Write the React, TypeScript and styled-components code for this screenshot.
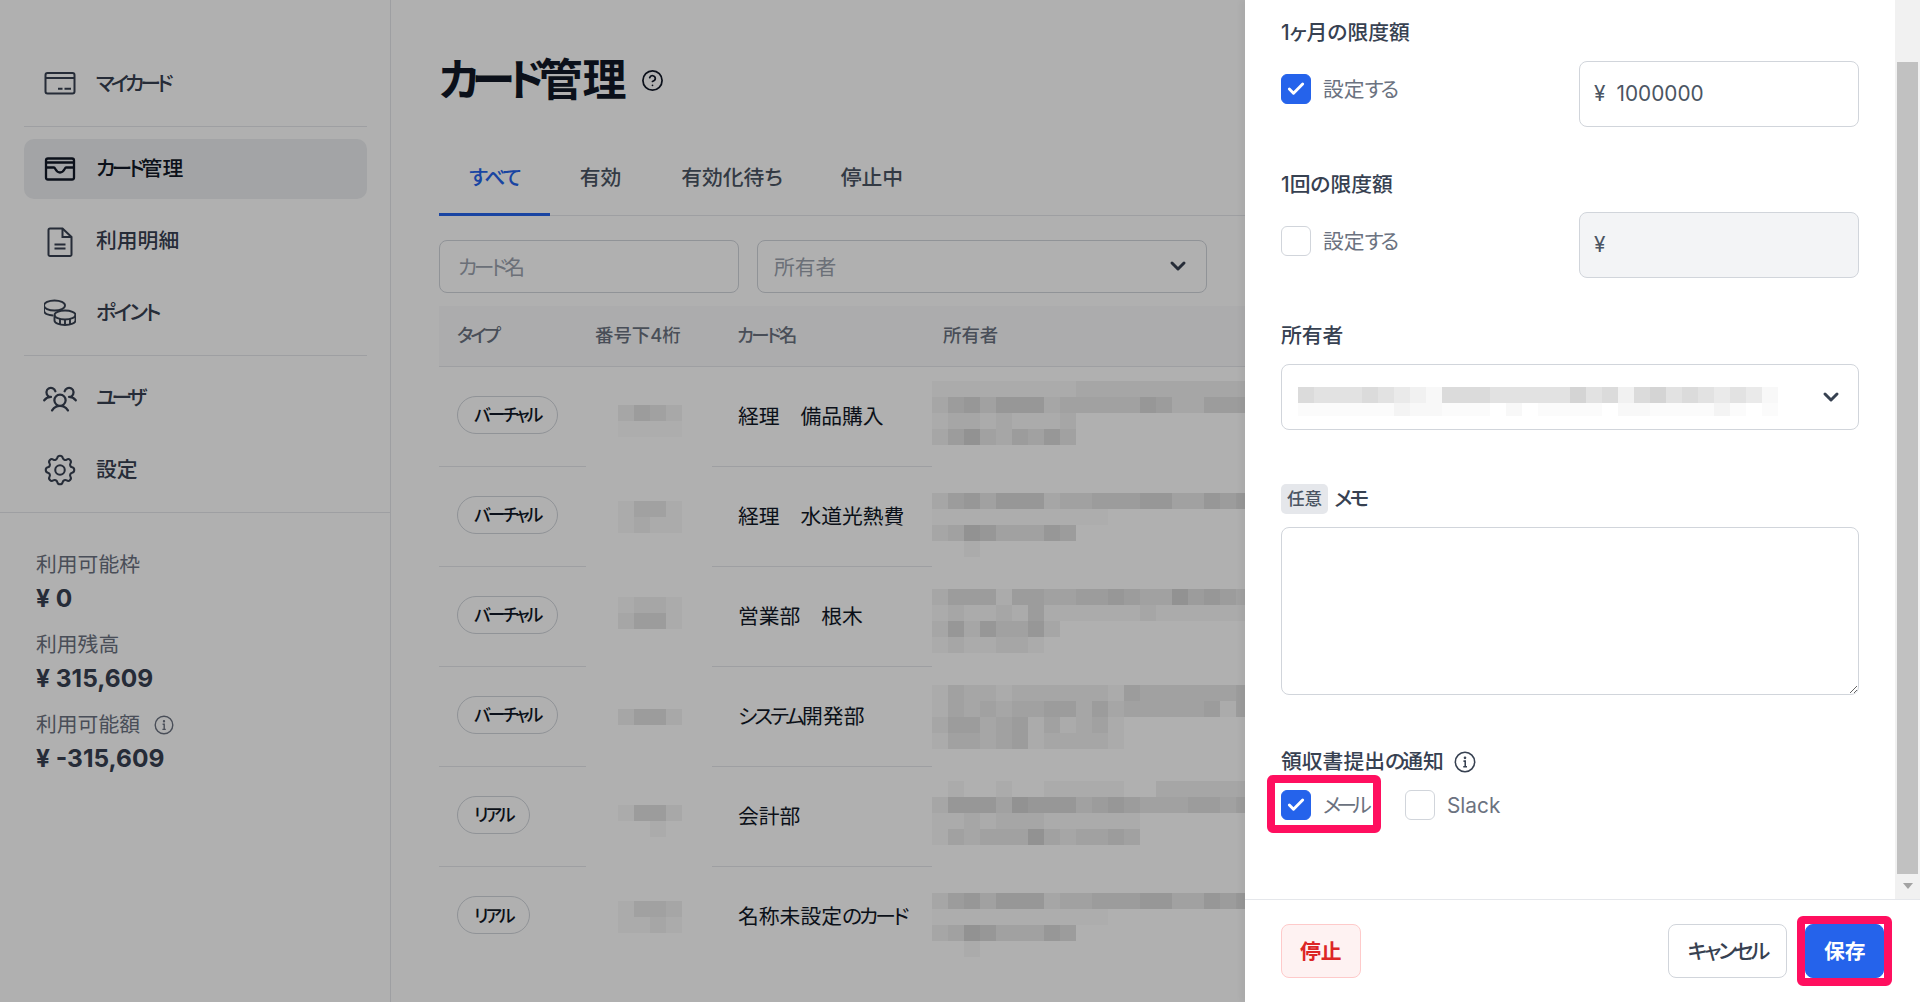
import React from "react";
import styled, { createGlobalStyle } from "styled-components";
import { ChevronDown, Check, CircleHelp } from "lucide-react";
import { TbSettings } from "react-icons/tb";
import { PiUsersThree } from "react-icons/pi";

const GlobalStyle = createGlobalStyle`
  html, body {
    margin: 0;
    padding: 0;
    background: #fff;
  }
  body {
    font-family: Inter, "Noto Sans CJK JP", sans-serif;
    font-feature-settings: "palt";
    color: #374151;
  }
  * {
    box-sizing: border-box;
  }
`;

const Page = styled.div`
  position: relative;
  display: flex;
  width: 1920px;
  height: 1002px;
  overflow: hidden;
  background: #fff;
`;

const Sidebar = styled.aside`
  flex: 0 0 391px;
  border-right: 1px solid #e5e7eb;
`;

const Nav = styled.nav`
  display: flex;
  flex-direction: column;
  gap: 12px;
  padding: 54px 23px 12px 24px;
  border-bottom: 1px solid #e5e7eb;
`;

const NavItem = styled.a<{ $active?: boolean }>`
  display: flex;
  align-items: center;
  gap: 20px;
  height: 60px;
  padding: 0 20px;
  border-radius: 10px;
  font-size: 20.8px;
  font-weight: 500;
  color: ${props => (props.$active ? "#111827" : "#374151")};
  background: ${props => (props.$active ? "#eceef1" : "transparent")};
  svg {
    flex: 0 0 32px;
    width: 32px;
    height: 32px;
  }
`;

const NavLabel = styled.span<{ $kana?: number }>`
  padding-bottom: 4px;
  span {
    letter-spacing: ${props => props.$kana ?? -0.14}em;
  }
`;

const UsersIcon = styled(PiUsersThree)`
  && {
    flex: 0 0 36px;
    width: 36px;
    height: 36px;
    margin: 0 -2px;
  }
`;

const GearIcon = styled(TbSettings)`
  && {
    flex: 0 0 38px;
    width: 38px;
    height: 38px;
    margin: 0 -3px;
    stroke-width: 1.3;
  }
`;

const NavDivider = styled.hr`
  width: 100%;
  height: 1px;
  margin: 0;
  border: 0;
  background: #e5e7eb;
`;

const Stats = styled.div`
  display: flex;
  flex-direction: column;
  gap: 15px;
  padding: 37px 36px 0;
`;

const StatLabel = styled.div`
  display: flex;
  align-items: center;
  gap: 14px;
  font-size: 20.8px;
  line-height: 30px;
  color: #6b7280;
`;

const StatValue = styled.div`
  margin-top: 1px;
  font-size: 24.5px;
  line-height: 34px;
  font-weight: 700;
  color: #374151;
`;

const Main = styled.main`
  flex: 1;
  min-width: 0;
  padding: 52px 0 0 48px;
`;

const TitleRow = styled.div`
  display: flex;
  align-items: center;
  gap: 14px;
  height: 56px;
  margin-bottom: 32px;
  color: #111827;
`;

const Title = styled.h1`
  margin: 0;
  font-size: 44px;
  line-height: 56px;
  font-weight: 600;
  span {
    letter-spacing: -0.17em;
  }
`;

const Tabs = styled.div`
  display: flex;
  height: 76px;
  border-bottom: 1px solid #e5e7eb;
`;

const Tab = styled.div<{ $active?: boolean }>`
  display: flex;
  align-items: center;
  height: 76px;
  padding: 0 30px 2px;
  border-bottom: 3px solid ${props => (props.$active ? "#2563eb" : "transparent")};
  font-size: 20.8px;
  font-weight: 500;
  color: ${props => (props.$active ? "#2563eb" : "#4b5563")};
  span span {
    letter-spacing: -0.1em;
  }
`;

const Filters = styled.div`
  display: flex;
  gap: 18px;
  margin: 24px 0 13px;
`;

const FilterInput = styled.input`
  width: 300px;
  height: 53px;
  padding: 2px 18px 0;
  border: 1px solid #d1d5db;
  border-radius: 8px;
  background: #fff;
  font: inherit;
  font-size: 20.8px;
  font-feature-settings: "palt";
  &::placeholder {
    color: #9ca3af;
    letter-spacing: -0.16em;
  }
`;

const FilterSelect = styled.div`
  display: flex;
  align-items: center;
  justify-content: space-between;
  width: 450px;
  height: 53px;
  padding: 0 16px 2px;
  border: 1px solid #d1d5db;
  border-radius: 8px;
  font-size: 20.8px;
  color: #9ca3af;
  svg {
    color: #374151;
  }
`;

const CardTable = styled.table`
  width: 100%;
  table-layout: fixed;
  border-collapse: separate;
  border-spacing: 0;
`;

const HeadCell = styled.th<{ $width?: number }>`
  width: ${props => (props.$width ? `${props.$width}px` : "auto")};
  height: 61px;
  padding: 0 0 4px 18px;
  border-bottom: 1px solid #e5e7eb;
  background: #f9fafb;
  font-size: 18.4px;
  font-weight: 500;
  text-align: left;
  color: #6b7280;
`;

const BodyRow = styled.tr`
  &:last-child td {
    border-bottom: 0;
  }
`;

const BodyCell = styled.td<{ $pad?: number }>`
  position: relative;
  height: 100px;
  padding: 0 0 4px ${props => props.$pad ?? 18}px;
  border-bottom: 1px solid #e5e7eb;
  font-size: 20.8px;
  color: #111827;
`;

const TypeTag = styled.span`
  display: inline-flex;
  align-items: center;
  height: 38px;
  padding: 0 16px 2px;
  border: 1px solid #d1d5db;
  border-radius: 19px;
  font-size: 17.6px;
  font-weight: 500;
  color: #111827;
  span span {
    letter-spacing: -0.16em;
  }
`;

const MosaicCover = styled.svg<{ $left: number; $width: number }>`
  position: absolute;
  top: 0;
  left: ${props => props.$left}px;
  width: ${props => props.$width}px;
  height: 101px;
  background: #fff;
`;

const Overlay = styled.div`
  position: absolute;
  inset: 0;
  background: rgba(0, 0, 0, 0.31);
`;

const Panel = styled.section`
  position: absolute;
  top: 0;
  right: 0;
  bottom: 0;
  display: flex;
  flex-direction: column;
  width: 675px;
  background: #fff;
  box-shadow: -4px 0 6px rgba(0, 0, 0, 0.04);
`;

const PanelBody = styled.div`
  display: flex;
  height: 899px;
`;

const Form = styled.div`
  flex: 1;
  display: flex;
  flex-direction: column;
  padding: 19px 36px 0;
`;

const Field = styled.div<{ $top?: number }>`
  margin-top: ${props => props.$top ?? 0}px;
`;

const FieldLabel = styled.div<{ $gap?: number; $below?: number }>`
  display: flex;
  align-items: center;
  gap: ${props => props.$gap ?? 6}px;
  margin-bottom: ${props => props.$below ?? 14}px;
  min-height: 28px;
  font-size: 20.8px;
  line-height: 28px;
  font-weight: 500;
  color: #374151;
`;

const OptionalBadge = styled.span`
  display: inline-flex;
  align-items: center;
  height: 30px;
  padding: 0 6px;
  border-radius: 5px;
  background: #e5e7eb;
  font-size: 17.6px;
  font-weight: 500;
  color: #4b5563;
`;

const LimitRow = styled.div`
  display: flex;
  justify-content: space-between;
  align-items: flex-start;
`;

const CheckLabel = styled.label<{ $top?: number }>`
  position: relative;
  display: flex;
  align-items: center;
  gap: 12px;
  height: 30px;
  margin-top: ${props => props.$top ?? 0}px;
  font-size: 20.8px;
  line-height: 30px;
  color: #6b7280;
`;

const CheckText = styled.span<{ $kana?: number }>`
  padding-top: 2px;
  span {
    letter-spacing: ${props => props.$kana ?? -0.14}em;
  }
`;

const CheckBox = styled.span<{ $checked?: boolean }>`
  display: flex;
  align-items: center;
  justify-content: center;
  width: 30px;
  height: 30px;
  border-radius: 6px;
  border: 1px solid ${props => (props.$checked ? "#2563eb" : "#d1d5db")};
  background: ${props => (props.$checked ? "#2563eb" : "#fff")};
  color: #fff;
`;

const AmountBox = styled.div<{ $disabled?: boolean }>`
  display: flex;
  align-items: center;
  gap: 11px;
  width: 280px;
  height: 66px;
  padding: 0 14px 2px;
  border: 1px solid #d1d5db;
  border-radius: 8px;
  background: ${props => (props.$disabled ? "#f3f4f6" : "#fff")};
  font-size: 20.8px;
  color: #4b5563;
`;

const AmountInput = styled.input`
  flex: 1;
  min-width: 0;
  padding: 0;
  border: 0;
  outline: 0;
  background: transparent;
  font: inherit;
  color: #4b5563;
`;

const OwnerSelect = styled.div`
  position: relative;
  display: flex;
  align-items: center;
  justify-content: flex-end;
  height: 66px;
  padding: 0 15px;
  border: 1px solid #d1d5db;
  border-radius: 8px;
  color: #374151;
`;

const OwnerMosaic = styled.svg`
  position: absolute;
  top: 22px;
  left: 16px;
  width: 480px;
  height: 29px;
`;

const MemoArea = styled.textarea`
  display: block;
  width: 100%;
  height: 168px;
  border: 1px solid #d1d5db;
  border-radius: 8px;
  outline: 0;
  background: #fff;
`;

const NotifyRow = styled.div`
  display: flex;
  gap: 38px;
`;

const Marked = styled.div<{ $t: number; $r: number; $b: number; $l: number }>`
  position: relative;
  &::after {
    content: "";
    position: absolute;
    top: ${props => props.$t}px;
    right: ${props => props.$r}px;
    bottom: ${props => props.$b}px;
    left: ${props => props.$l}px;
    border: 8px solid #ff0f5f;
    border-radius: 6px;
    pointer-events: none;
  }
`;

const ScrollTrack = styled.div`
  display: flex;
  flex-direction: column;
  align-items: center;
  flex: 0 0 25px;
  padding-top: 62px;
  background: #f1f1f1;
`;

const ScrollThumb = styled.div`
  width: 21px;
  height: 812px;
  background: #c1c1c1;
`;

const ScrollArrow = styled.div`
  width: 0;
  height: 0;
  margin-top: 9px;
  border-left: 5px solid transparent;
  border-right: 5px solid transparent;
  border-top: 6px solid #a3a3a3;
`;

const Footer = styled.footer`
  display: flex;
  align-items: center;
  justify-content: space-between;
  flex: 1;
  padding: 0 36px;
  border-top: 1px solid #e5e7eb;
`;

const FooterRight = styled.div`
  display: flex;
  gap: 18px;
`;

const Button = styled.button<{ $kind: "danger" | "plain" | "primary" }>`
  height: 54px;
  padding: 0 ${props => (props.$kind === "plain" ? 19 : props.$kind === "primary" ? 17.5 : 18)}px 3px;
  border-radius: 8px;
  border: 1px solid
    ${props =>
      props.$kind === "danger" ? "#fecaca" : props.$kind === "plain" ? "#d1d5db" : "#2563eb"};
  background: ${props =>
    props.$kind === "danger" ? "#fef2f2" : props.$kind === "plain" ? "#fff" : "#2563eb"};
  color: ${props =>
    props.$kind === "danger" ? "#dc2626" : props.$kind === "plain" ? "#374151" : "#fff"};
  font-family: inherit;
  font-feature-settings: "palt";
  font-size: 20.8px;
  font-weight: ${props => (props.$kind === "plain" ? 500 : 600)};
`;

const KanaRun = styled.span`
  letter-spacing: -0.14em;
`;

// the kana in the shot come from a narrower face, so runs of kana get tightened
const Jp = ({ children }: { children: string }) => (
  <>
    {children.split(/([\u3040-\u30ff]+)/).map((part, i) =>
      i % 2 === 1 ? <KanaRun key={i}>{part}</KanaRun> : part
    )}
  </>
);

const Mosaic = ({ rows, top = 0 }: { rows: string[]; top?: number }) => (
  <>
    {rows.map((row, r) =>
      row.split("").map((ch, i) => (
        <rect
          key={`${r}-${i}`}
          x={i * 16}
          y={top + r * 16}
          width={16}
          height={16}
          fill="#000"
          opacity={parseInt(ch, 16) * 0.014}
        />
      ))
    )}
  </>
);

const InfoIcon = ({ size }: { size: number }) => (
  <svg width={size} height={size} viewBox="0 0 20 20" fill="none" stroke="currentColor" strokeWidth="1.4">
    <circle cx="10" cy="10" r="8.8" />
    <path d="M8.6 9.2h1.6v5M8.4 14.4h3.4" />
    <circle cx="10" cy="6.2" r="0.5" fill="currentColor" />
  </svg>
);

const MyCardIcon = () => (
  <svg viewBox="0 0 32 32" fill="none" stroke="currentColor" strokeWidth="2">
    <rect x="1.5" y="5" width="29" height="20.5" rx="2" />
    <path d="M1.5 10h29M14 20.800h4.500M20.500 20.800h6.500" />
  </svg>
);

const WalletIcon = () => (
  <svg viewBox="0 0 32 32" fill="none" stroke="currentColor" strokeWidth="2.3">
    <rect x="2" y="5.500" width="28" height="21" rx="2" />
    <path d="M2 9.500h28M2 14.500h8c1.500 0 1.500 5 6 5s4.500-5 6-5h8" />
  </svg>
);

const DocIcon = () => (
  <svg viewBox="0 0 32 32" fill="none" stroke="currentColor" strokeWidth="2">
    <path d="M6 3.500h12.500l9 8.500v17.500a1.500 1.500 0 0 1-1.500 1.500H6a1.500 1.500 0 0 1-1.500-1.500V5a1.500 1.500 0 0 1 1.500-1.500z" />
    <path d="M18.500 3.500V12h9M10.500 19.500h11M10.500 23.500h11" />
  </svg>
);

const CoinsIcon = () => (
  <svg viewBox="0 0 32 32" fill="none" stroke="currentColor" strokeWidth="1.9">
    <ellipse cx="10.500" cy="8.500" rx="10.500" ry="5" />
    <path d="M0 8.500v5c0 2.500 4 4.500 9 5" />
    <ellipse cx="21" cy="18" rx="10.500" ry="4.500" />
    <path d="M10.500 18v5.500c0 2.500 4.500 4.500 10.500 4.500s10.500-2 10.500-4.500V18M16 22v5.500M21 22.500v5.500M26 22v5.500" />
  </svg>
);

const OWNER_SAME = ["48a6aaa466888aa66a8ae0", "11111111111", "46ca666a8", "0020"];

const cards = [
  {
    type: "バーチャル",
    name: "経理　備品購入",
    digitTop: 38,
    digits: ["00486300", "00111100"],
    ownerTop: 14,
    owner: ["22222222244444444444", "48a6aaa466666a844888a", "244242224", "48c6486a6"],
  },
  {
    type: "バーチャル",
    name: "経理　水道光熱費",
    digitTop: 34,
    digits: ["00266200", "00242200"],
    ownerTop: 26,
    owner: OWNER_SAME,
  },
  {
    type: "バーチャル",
    name: "営業部　根木",
    digitTop: 30,
    digits: ["00244200", "00488200"],
    ownerTop: 22,
    owner: ["48882886688a866c8a86", "24224282222224222222", "4a4a66a4", "2422442"],
  },
  {
    type: "バーチャル",
    name: "システム開発部",
    digitTop: 42,
    digits: ["00488300"],
    ownerTop: 18,
    owner: ["26442444444286666668", "26464668848466666828", "488468262462", "266468244442"],
  },
  {
    type: "リアル",
    name: "会計部",
    digitTop: 38,
    digits: ["00288300", "00002000"],
    ownerTop: 14,
    owner: ["02002002222200444444", "4aaa6caaa68a86668868", "2242444222222", "264666c646686"],
  },
  {
    type: "リアル",
    name: "名称未設定のカード",
    digitTop: 34,
    digits: ["00266400", "00224200"],
    ownerTop: 26,
    owner: OWNER_SAME,
  },
];

export default function App() {
  return (
    <Page>
      <GlobalStyle />
      <Sidebar>
        <Nav>
          <NavItem><MyCardIcon /><NavLabel $kana={-0.19}><Jp>マイカード</Jp></NavLabel></NavItem>
          <NavDivider />
          <NavItem $active><WalletIcon /><NavLabel $kana={-0.17}><Jp>カード管理</Jp></NavLabel></NavItem>
          <NavItem><DocIcon /><NavLabel>利用明細</NavLabel></NavItem>
          <NavItem><CoinsIcon /><NavLabel $kana={-0.12}><Jp>ポイント</Jp></NavLabel></NavItem>
          <NavDivider />
          <NavItem><UsersIcon /><NavLabel $kana={-0.22}><Jp>ユーザ</Jp></NavLabel></NavItem>
          <NavItem><GearIcon /><NavLabel>設定</NavLabel></NavItem>
        </Nav>
        <Stats>
          <div>
            <StatLabel>利用可能枠</StatLabel>
            <StatValue>¥ 0</StatValue>
          </div>
          <div>
            <StatLabel>利用残高</StatLabel>
            <StatValue>¥ 315,609</StatValue>
          </div>
          <div>
            <StatLabel>利用可能額<InfoIcon size={20} /></StatLabel>
            <StatValue>¥ -315,609</StatValue>
          </div>
        </Stats>
      </Sidebar>

      <Main>
        <TitleRow>
          <Title><Jp>カード管理</Jp></Title>
          <CircleHelp size={23} strokeWidth={1.8} />
        </TitleRow>
        <Tabs>
          <Tab $active><span><Jp>すべて</Jp></span></Tab>
          <Tab>有効</Tab>
          <Tab><span><Jp>有効化待ち</Jp></span></Tab>
          <Tab>停止中</Tab>
        </Tabs>
        <Filters>
          <FilterInput placeholder="カード名" />
          <FilterSelect>
            所有者
            <ChevronDown size={24} strokeWidth={3} />
          </FilterSelect>
        </Filters>
        <CardTable>
          <thead>
            <tr>
              <HeadCell $width={138}><Jp>タイプ</Jp></HeadCell>
              <HeadCell $width={142}>番号下4桁</HeadCell>
              <HeadCell $width={206}><Jp>カード名</Jp></HeadCell>
              <HeadCell>所有者</HeadCell>
            </tr>
          </thead>
          <tbody>
            {cards.map(card => (
              <BodyRow key={card.name}>
                <BodyCell><TypeTag><span><Jp>{card.type}</Jp></span></TypeTag></BodyCell>
                <BodyCell>
                  <MosaicCover $left={9} $width={126}>
                    <Mosaic rows={card.digits} top={card.digitTop} />
                  </MosaicCover>
                </BodyCell>
                <BodyCell $pad={19}><Jp>{card.name}</Jp></BodyCell>
                <BodyCell>
                  <MosaicCover $left={7} $width={320}>
                    <Mosaic rows={card.owner} top={card.ownerTop} />
                  </MosaicCover>
                </BodyCell>
              </BodyRow>
            ))}
          </tbody>
        </CardTable>
      </Main>

      <Overlay />

      <Panel>
        <PanelBody>
          <Form>
            <Field>
              <FieldLabel>1ヶ月の限度額</FieldLabel>
              <LimitRow>
                <CheckLabel $top={13}>
                  <CheckBox $checked><Check size={20} strokeWidth={3.5} /></CheckBox>
                  <CheckText>設定<Jp>する</Jp></CheckText>
                </CheckLabel>
                <AmountBox>
                  ¥
                  <AmountInput defaultValue="1000000" />
                </AmountBox>
              </LimitRow>
            </Field>
            <Field $top={44}>
              <FieldLabel $below={13}>1回の限度額</FieldLabel>
              <LimitRow>
                <CheckLabel $top={14}>
                  <CheckBox />
                  <CheckText>設定<Jp>する</Jp></CheckText>
                </CheckLabel>
                <AmountBox $disabled>¥</AmountBox>
              </LimitRow>
            </Field>
            <Field $top={44}>
              <FieldLabel>所有者</FieldLabel>
              <OwnerSelect>
                <OwnerMosaic>
                  <Mosaic rows={["a888a8642aaa88888c8a4ac8a86862", "111111322111020111102211113101"]} />
                </OwnerMosaic>
                <ChevronDown size={24} strokeWidth={3} />
              </OwnerSelect>
            </Field>
            <Field $top={54}>
              <FieldLabel $below={13}>
                <OptionalBadge>任意</OptionalBadge>
                <span><Jp>メモ</Jp></span>
              </FieldLabel>
              <MemoArea />
            </Field>
            <Field $top={53}>
              <FieldLabel $gap={10}>
                <span>領収書提出<Jp>の</Jp>通知</span>
                <InfoIcon size={22} />
              </FieldLabel>
              <NotifyRow>
                <Marked $t={-15} $r={-14} $b={-13} $l={-14}>
                  <CheckLabel>
                    <CheckBox $checked><Check size={20} strokeWidth={3.5} /></CheckBox>
                    <CheckText $kana={-0.227}><Jp>メール</Jp></CheckText>
                  </CheckLabel>
                </Marked>
                <CheckLabel>
                  <CheckBox />
                  <CheckText>Slack</CheckText>
                </CheckLabel>
              </NotifyRow>
            </Field>
          </Form>
          <ScrollTrack>
            <ScrollThumb />
            <ScrollArrow />
          </ScrollTrack>
        </PanelBody>
        <Footer>
          <Button $kind="danger">停止</Button>
          <FooterRight>
            <Button $kind="plain"><Jp>キャンセル</Jp></Button>
            <Marked $t={-8} $r={-8} $b={-8} $l={-8}>
              <Button $kind="primary">保存</Button>
            </Marked>
          </FooterRight>
        </Footer>
      </Panel>
    </Page>
  );
}
